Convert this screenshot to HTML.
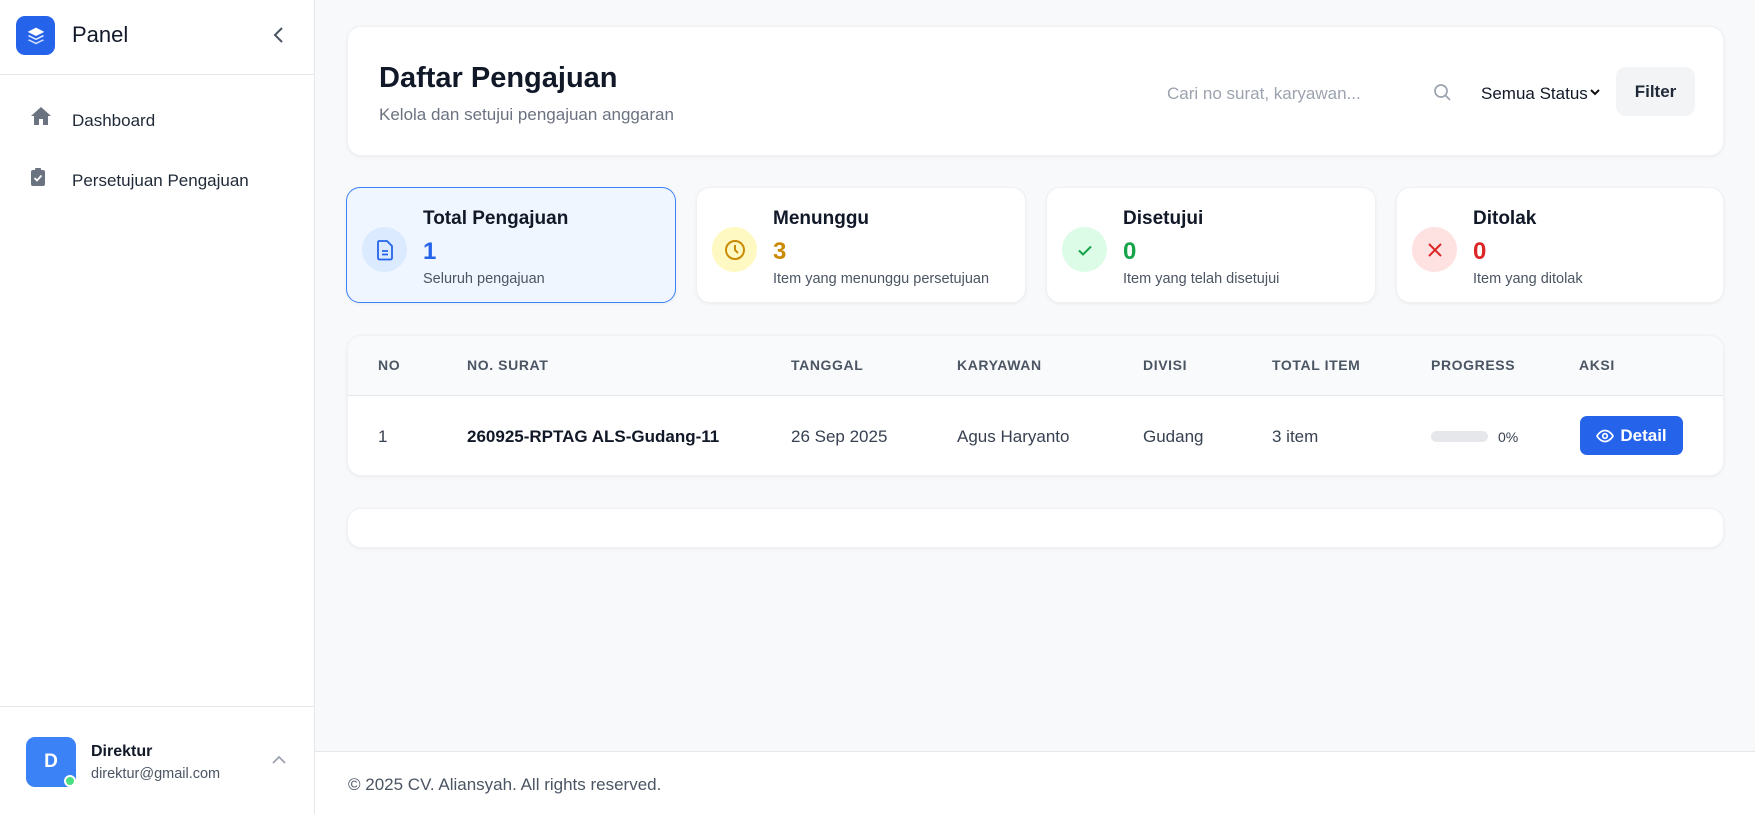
<!DOCTYPE html>
<html><head><meta charset="utf-8"><style>
*{box-sizing:border-box;margin:0;padding:0}
body{width:1755px;height:814px;overflow:hidden;background:#f8f9fb;font-family:"Liberation Sans",sans-serif;color:#111827;position:relative}
.abs{position:absolute}
.sb{left:0;top:0;width:315px;height:814px;background:#fff;border-right:1px solid #e5e7eb}
.card{background:#fff;border-radius:14px;box-shadow:0 1px 3px rgba(0,0,0,.06);border:1px solid #f0f1f3}
.stat{top:187px;height:116px;width:330px}
.ic{left:15px;top:39px;width:45px;height:45px;border-radius:50%;display:flex;align-items:center;justify-content:center}
.st{left:76px;top:20px;font-size:19px;font-weight:bold}
.sv{left:76px;top:50px;font-size:24px;font-weight:bold}
.ss{left:76px;top:83px;font-size:14.5px;color:#4b5563}
.th{top:357px;font-size:14px;color:#4b5563;letter-spacing:.6px;font-weight:bold}
.td{top:427px;font-size:17px;color:#374151}
</style></head><body>
<div class="abs sb">
 <div class="abs" style="left:16px;top:16px;width:39px;height:39px;background:#2563eb;border-radius:9px;display:flex;align-items:center;justify-content:center">
  <svg width="20" height="20" viewBox="0 0 24 24" fill="#fff"><path d="M12 2 2 7l10 5 10-5z"/><path d="M2 12l10 5 10-5-2-1-8 4-8-4z" opacity=".9"/><path d="M2 17l10 5 10-5-2-1-8 4-8-4z" opacity=".8"/></svg>
 </div>
 <div class="abs" style="left:72px;top:22px;font-size:22px;color:#111827">Panel</div>
 <svg class="abs" style="left:271px;top:26px" width="16" height="18" viewBox="0 0 16 18"><path d="M11 2 4 9l7 7" stroke="#4b5563" stroke-width="2" fill="none"/></svg>
 <div class="abs" style="left:0;top:74px;width:315px;height:1px;background:#e5e7eb"></div>
 <svg class="abs" style="left:30px;top:106px" width="22" height="20" viewBox="0 0 22 20"><path d="M11 1 1 10h3v9h5v-6h4v6h5v-9h3z" fill="#6b7280"/></svg>
 <div class="abs" style="left:72px;top:111px;font-size:17px;color:#1f2937">Dashboard</div>
 <svg class="abs" style="left:30px;top:167px" width="16" height="20" viewBox="0 0 16 20"><rect x="1" y="3" width="14" height="16" rx="2" fill="#6b7280"/><rect x="5" y="1" width="6" height="4" rx="1" fill="#6b7280"/><path d="M4.5 11l2.5 2.5 4.5-5" stroke="#fff" stroke-width="1.8" fill="none"/></svg>
 <div class="abs" style="left:72px;top:171px;font-size:17px;color:#1f2937">Persetujuan Pengajuan</div>
 <div class="abs" style="left:0;top:706px;width:315px;height:1px;background:#e5e7eb"></div>
 <div class="abs" style="left:26px;top:737px;width:50px;height:50px;background:#3b82f6;border-radius:9px;color:#fff;font-size:19px;font-weight:bold;display:flex;align-items:center;justify-content:center">D</div>
 <div class="abs" style="left:64px;top:775px;width:12px;height:12px;background:#4ade80;border-radius:50%;border:2px solid #fff"></div>
 <div class="abs" style="left:91px;top:743px;font-size:16px;font-weight:bold">Direktur</div>
 <div class="abs" style="left:91px;top:766px;font-size:14.5px;color:#4b5563">direktur@gmail.com</div>
 <svg class="abs" style="left:271px;top:754px" width="16" height="12" viewBox="0 0 16 12"><path d="M2 9l6-6 6 6" stroke="#9ca3af" stroke-width="1.8" fill="none"/></svg>
</div>

<div class="abs card" style="left:347px;top:26px;width:1377px;height:130px">
 <div class="abs" style="left:31px;top:35px;font-size:29px;font-weight:bold">Daftar Pengajuan</div>
 <div class="abs" style="left:31px;top:78px;font-size:17px;color:#6b7280">Kelola dan setujui pengajuan anggaran</div>
 <div class="abs" style="left:819px;top:57px;font-size:17px;color:#9ca3af">Cari no surat, karyawan...</div>
 <svg class="abs" style="left:1085px;top:56px" width="20" height="20" viewBox="0 0 20 20"><circle cx="8" cy="8" r="6" stroke="#9ca3af" stroke-width="1.7" fill="none"/><path d="M12.5 12.5 17 17" stroke="#9ca3af" stroke-width="1.7"/></svg>
 <div class="abs" style="left:1133px;top:57px;font-size:17px;color:#111827">Semua Status</div>
 <svg class="abs" style="left:1241px;top:60px" width="12" height="10" viewBox="0 0 12 10"><path d="M2 3l4 4 4-4" stroke="#111" stroke-width="2" fill="none"/></svg>
 <div class="abs" style="left:1268px;top:40px;width:79px;height:49px;background:#f3f4f6;border-radius:10px;font-size:17px;font-weight:bold;color:#1f2937;display:flex;align-items:center;justify-content:center">Filter</div>
</div>

<div class="abs card stat" style="left:346px;background:#eff6ff;border:1.5px solid #3b82f6">
 <div class="abs ic" style="background:#dbeafe"><svg width="20" height="22" viewBox="0 0 20 22"><path d="M4 2h8l5 5v12a1.5 1.5 0 0 1-1.5 1.5h-11A1.5 1.5 0 0 1 3 19V3.5A1.5 1.5 0 0 1 4 2z" stroke="#2563eb" stroke-width="1.8" fill="none"/><path d="M7 12h6M7 15.5h6" stroke="#2563eb" stroke-width="1.8"/></svg></div>
 <div class="abs st">Total Pengajuan</div><div class="abs sv" style="color:#2563eb">1</div><div class="abs ss">Seluruh pengajuan</div>
</div>
<div class="abs card stat" style="left:696px">
 <div class="abs ic" style="background:#fef9c3"><svg width="24" height="24" viewBox="0 0 24 24"><circle cx="12" cy="12" r="9" stroke="#ca8a04" stroke-width="2" fill="none"/><path d="M12 7v5l3 3" stroke="#ca8a04" stroke-width="2" fill="none"/></svg></div>
 <div class="abs st">Menunggu</div><div class="abs sv" style="color:#ca8a04">3</div><div class="abs ss">Item yang menunggu persetujuan</div>
</div>
<div class="abs card stat" style="left:1046px">
 <div class="abs ic" style="background:#dcfce7"><svg width="20" height="20" viewBox="0 0 20 20"><path d="M4 10.5l4 4 8-8" stroke="#16a34a" stroke-width="2" fill="none"/></svg></div>
 <div class="abs st">Disetujui</div><div class="abs sv" style="color:#16a34a">0</div><div class="abs ss">Item yang telah disetujui</div>
</div>
<div class="abs card stat" style="left:1396px;width:328px">
 <div class="abs ic" style="background:#fee2e2"><svg width="20" height="20" viewBox="0 0 20 20"><path d="M4 4l12 12M16 4 4 16" stroke="#dc2626" stroke-width="2"/></svg></div>
 <div class="abs st">Ditolak</div><div class="abs sv" style="color:#dc2626">0</div><div class="abs ss">Item yang ditolak</div>
</div>

<div class="abs card" style="left:347px;top:335px;width:1377px;height:141px;overflow:hidden">
 <div class="abs" style="left:0;top:0;width:1377px;height:60px;background:#f9fafb;border-bottom:1px solid #e5e7eb"></div>
</div>
<div class="abs th" style="left:378px">NO</div>
<div class="abs th" style="left:467px">NO. SURAT</div>
<div class="abs th" style="left:791px">TANGGAL</div>
<div class="abs th" style="left:957px">KARYAWAN</div>
<div class="abs th" style="left:1143px">DIVISI</div>
<div class="abs th" style="left:1272px">TOTAL ITEM</div>
<div class="abs th" style="left:1431px">PROGRESS</div>
<div class="abs th" style="left:1579px">AKSI</div>
<div class="abs td" style="left:378px">1</div>
<div class="abs td" style="left:467px;font-weight:bold;color:#111827">260925-RPTAG ALS-Gudang-11</div>
<div class="abs td" style="left:791px">26 Sep 2025</div>
<div class="abs td" style="left:957px">Agus Haryanto</div>
<div class="abs td" style="left:1143px">Gudang</div>
<div class="abs td" style="left:1272px">3 item</div>
<div class="abs" style="left:1431px;top:431px;width:57px;height:11px;border-radius:6px;background:#e5e7eb"></div>
<div class="abs" style="left:1498px;top:429px;font-size:14px;color:#374151">0%</div>
<div class="abs" style="left:1580px;top:416px;width:103px;height:39px;background:#2563eb;border-radius:7px;color:#fff;font-size:17px;font-weight:bold;display:flex;align-items:center;justify-content:center;gap:6px">
 <svg width="18" height="14" viewBox="0 0 18 14"><path d="M1 7s3-5.5 8-5.5S17 7 17 7s-3 5.5-8 5.5S1 7 1 7z" stroke="#fff" stroke-width="1.7" fill="none"/><circle cx="9" cy="7" r="2.3" stroke="#fff" stroke-width="1.7" fill="none"/></svg>Detail</div>

<div class="abs card" style="left:347px;top:508px;width:1377px;height:40px"></div>

<div class="abs" style="left:315px;top:751px;width:1440px;height:63px;background:#fff;border-top:1px solid #e5e7eb"></div>
<div class="abs" style="left:348px;top:775px;font-size:17px;color:#4b5563">© 2025 CV. Aliansyah. All rights reserved.</div>
</body></html>
